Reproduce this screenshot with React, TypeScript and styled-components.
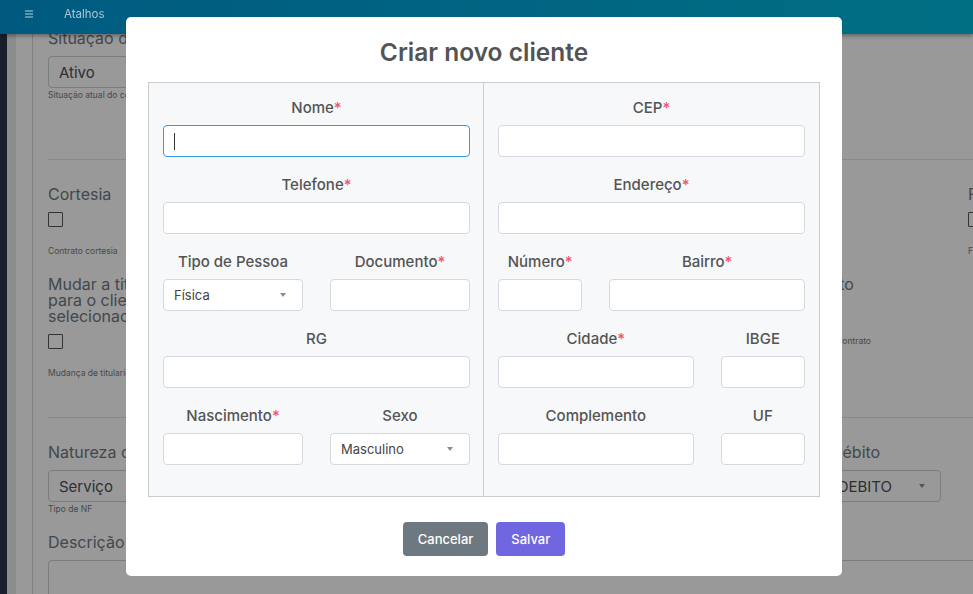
import React from 'react';
import styled, { createGlobalStyle } from 'styled-components';

const GlobalStyle = createGlobalStyle`
  html, body {
    margin: 0;
    padding: 0;
    overflow: hidden;
    background: #ffffff;
    font-family: Inter, "Open Sans", "Noto Sans", sans-serif;
  }
  * {
    box-sizing: border-box;
  }
`;

/* ---------- page behind the dialog ---------- */

const Shell = styled.div`
  display: flex;
  height: 100vh;
  background: #ffffff;
`;

const Rail = styled.div`
  width: 7px;
  flex-shrink: 0;
  background: #283546;
`;

const Gutter = styled.div`
  width: 9px;
  flex-shrink: 0;
  background: #e9e9e9;
`;

const MainArea = styled.main`
  flex: 1;
  padding-left: 16px;
  min-width: 0;
`;

const Card = styled.section`
  height: 100%;
  border-left: 1px solid #d6d6d6;
  padding: 30px 0 0 15px;
`;

const TopBar = styled.header`
  position: fixed;
  top: 0;
  left: 0;
  right: 0;
  height: 40px;
  z-index: 20;
  display: flex;
  align-items: center;
  gap: 30px;
  padding: 0 0 0 24px;
  background: linear-gradient(90deg, #005a80, #006f84);
  box-shadow: 0 2px 4px rgba(0, 0, 0, 0.35);
  color: rgba(255, 255, 255, 0.65);
  font-size: 11.5px;
  margin-top: -6px;
`;

const MenuIcon = styled.svg`
  width: 10px;
  height: 10px;
`;

const FieldGrid = styled.div`
  display: grid;
  grid-template-columns: repeat(5, 203px);
  column-gap: 27px;
  row-gap: 20px;
`;

const BgField = styled.div<{ $wide?: boolean }>`
  display: flex;
  flex-direction: column;
  ${p => p.$wide && 'grid-column: 1 / -1;'}
`;

const BgLabel = styled.div`
  font-size: 16px;
  line-height: 16px;
  color: #6f7882;
  margin-bottom: 10px;
  white-space: nowrap;
`;

const BgSelect = styled.div`
  height: 32px;
  border: 1px solid #cfcfcf;
  border-radius: 4px;
  display: flex;
  align-items: center;
  justify-content: space-between;
  padding: 0 15px 0 10px;
  font-size: 15px;
  color: #4d4f52;
`;

const BgHelp = styled.div`
  font-size: 8.5px;
  line-height: 10px;
  margin-top: 2px;
  color: #7a7a7a;
  white-space: nowrap;
`;

const BgCheck = styled.div`
  width: 15px;
  height: 15px;
  border: 1px solid #555;
  border-radius: 1px;
  margin: 0 0 17px;
`;

const BgTextArea = styled.div`
  height: 90px;
  border: 1px solid #cfcfcf;
  border-radius: 4px;
`;

const Divider = styled.hr<{ $top: number }>`
  border: 0;
  border-top: 1px solid #e4e4e4;
  margin: ${p => p.$top}px 0 26px;
`;

/* ---------- dialog ---------- */

const Backdrop = styled.div`
  position: fixed;
  inset: 0;
  z-index: 10;
  background: rgba(0, 0, 0, 0.4);
`;

const DialogLayer = styled.div`
  position: fixed;
  inset: 0;
  z-index: 30;
  display: flex;
  justify-content: center;
  align-items: flex-start;
  padding: 17px 5px 0 0;
`;

const Dialog = styled.div`
  width: 716px;
  background: #ffffff;
  border-radius: 5px;
  padding: 20px 22px 20px;
  font-family: Inter, "Open Sans", sans-serif;
`;

const Title = styled.h2`
  margin: 0;
  font-size: 24.5px;
  line-height: 30px;
  font-weight: 600;
  color: #545454;
  text-align: center;
`;

const Panel = styled.div`
  margin-top: 15px;
  display: grid;
  grid-template-columns: 1fr 1fr;
  background: #f7f8fa;
  border: 1px solid #cccccc;
`;

const PanelColumn = styled.div<{ $divider?: boolean }>`
  display: flex;
  flex-direction: column;
  gap: 17px;
  padding: 14px 14px 31px 14px;
  ${p => p.$divider && 'border-right: 1px solid #cccccc; padding-right: 13px;'}
`;

const Row = styled.div<{ $cols: string }>`
  display: grid;
  grid-template-columns: ${p => p.$cols};
  column-gap: 27px;
`;

const Field = styled.div`
  display: flex;
  flex-direction: column;
  min-width: 0;
`;

const Label = styled.label`
  font-size: 15px;
  line-height: 22px;
  font-weight: 500;
  color: #545454;
  text-align: center;
  margin-bottom: 6px;
  white-space: nowrap;
`;

const Required = styled.span`
  color: #f3546a;
`;

const TextBox = styled.div<{ $focused?: boolean }>`
  height: 32px;
  background: #ffffff;
  border: 1px solid ${p => (p.$focused ? '#3898ec' : '#d5d9df')};
  border-radius: 4px;
  display: flex;
  align-items: center;
  padding: 0 10px;
`;

const Caret = styled.span`
  width: 1px;
  height: 17px;
  background: #333;
`;

const SelectBox = styled.div`
  height: 32px;
  background: #ffffff;
  border: 1px solid #d5d9df;
  border-radius: 4px;
  display: flex;
  align-items: center;
  justify-content: space-between;
  padding: 0 16px 0 10px;
  font-size: 13px;
  color: #444;
`;

const Arrow = styled.span<{ $size?: number }>`
  width: 0;
  height: 0;
  border-left: ${p => p.$size ?? 3}px solid transparent;
  border-right: ${p => p.$size ?? 3}px solid transparent;
  border-top: ${p => (p.$size ?? 3) + 1}px solid #8c8c8c;
`;

const Actions = styled.div`
  display: flex;
  justify-content: center;
  gap: 8px;
  margin-top: 25px;
`;

const Button = styled.button<{ $variant: 'cancel' | 'confirm' }>`
  height: 34px;
  padding: 0 15px;
  border: 0;
  border-radius: 4px;
  background: ${p => (p.$variant === 'cancel' ? '#6e7881' : '#7066e0')};
  color: #ffffff;
  font-family: inherit;
  font-size: 13px;
  font-weight: 500;
`;

const third = 'calc((100% + 27px) / 3 - 27px)';

type Col = { label: string; required?: boolean; kind?: 'text' | 'select'; value?: string; focused?: boolean };

const FormField: React.FC<Col> = ({ label, required, kind = 'text', value, focused }) => (
  <Field>
    <Label>
      {label}
      {required && <Required>*</Required>}
    </Label>
    {kind === 'select' ? (
      <SelectBox>
        {value}
        <Arrow />
      </SelectBox>
    ) : (
      <TextBox $focused={focused}>{focused && <Caret />}</TextBox>
    )}
  </Field>
);

const App: React.FC = () => {
  return (
    <>
      <GlobalStyle />
      <TopBar>
        <MenuIcon viewBox="0 0 10 10">
          <path d="M1 2h8M1 5h8M1 8h8" stroke="rgba(255,255,255,0.7)" strokeWidth="1.2" />
        </MenuIcon>
        <span>Atalhos</span>
      </TopBar>

      <Shell>
        <Rail />
        <Gutter />
        <MainArea>
          <Card>
            <FieldGrid>
              <BgField>
                <BgLabel>Situação do contrato</BgLabel>
                <BgSelect>Ativo<Arrow /></BgSelect>
                <BgHelp>Situação atual do contrato</BgHelp>
              </BgField>
            </FieldGrid>

            <Divider $top={59} />

            <FieldGrid>
              <BgField>
                <BgLabel>Cortesia</BgLabel>
                <BgCheck />
                <BgHelp>Contrato cortesia</BgHelp>
              </BgField>
              <BgField>
                <BgLabel>Renovação</BgLabel>
                <BgCheck />
                <BgHelp>Renovação automática</BgHelp>
              </BgField>
              <BgField>
                <BgLabel>Bloqueio</BgLabel>
                <BgCheck />
                <BgHelp>Bloqueio automático</BgHelp>
              </BgField>
              <BgField>
                <BgLabel>Contrato Test</BgLabel>
                <BgCheck />
                <BgHelp>Contrato de teste</BgHelp>
              </BgField>
              <BgField>
                <BgLabel>Fidelidade</BgLabel>
                <BgCheck />
                <BgHelp>Fidelidade do contrato</BgHelp>
              </BgField>

              <BgField>
                <BgLabel>
                  Mudar a titularidade
                  <br />
                  para o cliente
                  <br />
                  selecionado
                </BgLabel>
                <BgCheck />
                <BgHelp>Mudança de titularidade</BgHelp>
              </BgField>
              <BgField />
              <BgField />
              <BgField>
                <BgLabel>Contrato isento</BgLabel>
                <BgCheck />
                <BgHelp>Isenção de cobrança do contrato</BgHelp>
              </BgField>
            </FieldGrid>

            <Divider $top={39} />

            <FieldGrid>
              <BgField>
                <BgLabel>Natureza da operação</BgLabel>
                <BgSelect>Serviço<Arrow /></BgSelect>
                <BgHelp>Tipo de NF</BgHelp>
              </BgField>
              <BgField />
              <BgField />
              <BgField>
                <BgLabel>Modalidade Débito</BgLabel>
                <BgSelect>CARTÃO DE DEBITO<Arrow /></BgSelect>
                <BgHelp>Modalidade de Débito</BgHelp>
              </BgField>
              <BgField />
              <BgField $wide>
                <BgLabel>Descrição do serviço</BgLabel>
                <BgTextArea />
              </BgField>
            </FieldGrid>
          </Card>
        </MainArea>
      </Shell>

      <Backdrop />

      <DialogLayer>
        <Dialog>
          <Title>Criar novo cliente</Title>
          <Panel>
            <PanelColumn $divider>
              <Row $cols="1fr">
                <FormField label="Nome" required focused />
              </Row>
              <Row $cols="1fr">
                <FormField label="Telefone" required />
              </Row>
              <Row $cols="1fr 1fr">
                <FormField label="Tipo de Pessoa" kind="select" value="Física" />
                <FormField label="Documento" required />
              </Row>
              <Row $cols="1fr">
                <FormField label="RG" />
              </Row>
              <Row $cols="1fr 1fr">
                <FormField label="Nascimento" required />
                <FormField label="Sexo" kind="select" value="Masculino" />
              </Row>
            </PanelColumn>
            <PanelColumn>
              <Row $cols="1fr">
                <FormField label="CEP" required />
              </Row>
              <Row $cols="1fr">
                <FormField label="Endereço" required />
              </Row>
              <Row $cols={`${third} 1fr`}>
                <FormField label="Número" required />
                <FormField label="Bairro" required />
              </Row>
              <Row $cols={`1fr ${third}`}>
                <FormField label="Cidade" required />
                <FormField label="IBGE" />
              </Row>
              <Row $cols={`1fr ${third}`}>
                <FormField label="Complemento" />
                <FormField label="UF" />
              </Row>
            </PanelColumn>
          </Panel>
          <Actions>
            <Button $variant="cancel">Cancelar</Button>
            <Button $variant="confirm">Salvar</Button>
          </Actions>
        </Dialog>
      </DialogLayer>
    </>
  );
};

export default App;
